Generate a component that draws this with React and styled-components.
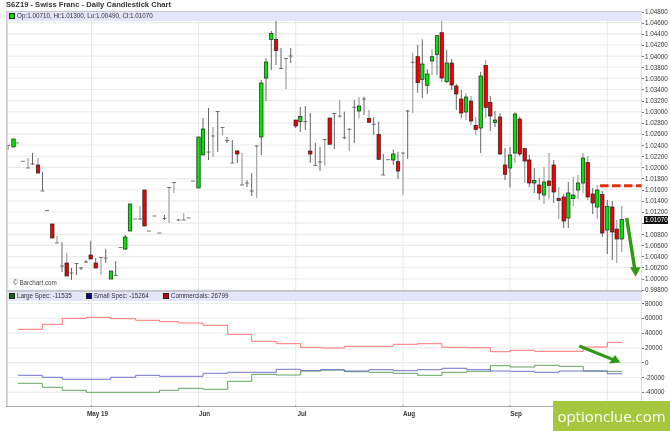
import React from "react";
import styled, { createGlobalStyle } from "styled-components";

const Global = createGlobalStyle`
  html, body { margin: 0; padding: 0; background: #fff; overflow: hidden; }
  body { font-family: "Liberation Sans", Arial, sans-serif; }
`;

const Page = styled.div`
  position: relative;
  width: 670px;
  height: 431px;
  overflow: hidden;
  background: #fff;
  filter: blur(0.3px);
`;
const Title = styled.h1`
  margin: 0;
  padding: 0 0 0 6px;
  height: 11px;
  font-size: 7.6px;
  line-height: 10px;
  font-weight: 700;
  color: #333;
  white-space: nowrap;
`;
const ChartRow = styled.div`
  display: grid;
  grid-template-columns: 636px 28px;
  margin-left: 6px;
`;
const Plot = styled.div`
  display: flex;
  flex-direction: column;
`;
const Pane = styled.div`
  position: relative;
  height: ${(p) => p.$h}px;
`;
const PaneSvg = styled.svg`
  display: block;
  width: 636px;
  height: ${(p) => p.$h}px;
`;
const Legend = styled.div`
  position: absolute;
  left: 2px;
  right: 0;
  top: ${(p) => p.$top}px;
  height: 8.5px;
  display: flex;
  align-items: center;
  gap: 14px;
  padding-left: 1px;
  background: rgba(226, 226, 250, 0.92);
  font-size: 6.3px;
  line-height: 8px;
  color: #333;
  white-space: nowrap;
`;
const LegendItem = styled.span`
  display: inline-flex;
  align-items: center;
  gap: 2px;
`;
const Swatch = styled.i`
  display: block;
  width: 4px;
  height: 4px;
  border: 0.5px solid #222;
  background: ${(p) => p.$c};
`;
const Credit = styled.div`
  position: absolute;
  left: 7px;
  top: 267px;
  font-size: 6.3px;
  line-height: 9px;
  color: #444;
`;
const AxisColumn = styled.div`
  margin-top: -5px;
  display: flex;
  flex-direction: column;
  height: 300px;
  position: relative;
`;
const AxisList = styled.div`
  display: flex;
  flex-direction: column;
  margin-top: ${(p) => p.$mt || 0}px;
`;
const AxisLabel = styled.div`
  height: ${(p) => p.$h}px;
  display: flex;
  align-items: center;
  padding-left: 3px;
  position: relative;
  font-size: 6.3px;
  color: #333;
  &::before {
    content: "";
    position: absolute;
    left: 0;
    top: 50%;
    width: 2px;
    height: 0.7px;
    background: #777;
  }
`;
const LastPrice = styled.div`
  position: absolute;
  left: 2px;
  top: 209.5px;
  width: 24px;
  height: 8px;
  padding-left: 1px;
  box-sizing: border-box;
  background: #111;
  color: #fff;
  font-size: 6.3px;
  line-height: 8px;
`;
const XAxis = styled.div`
  display: grid;
  grid-template-columns: 60px 154px 41px 173px 41px;
  padding-left: 61.5px;
  padding-top: 1px;
  height: 13px;
`;
const XLabel = styled.div`
  text-align: center;
  font-size: 6.3px;
  line-height: 12px;
  font-weight: 700;
  color: #333;
`;
const Watermark = styled.div`
  position: absolute;
  right: 0;
  bottom: 0;
  width: 117px;
  height: 30px;
  background: #a6c63c;
  color: #fff;
  display: flex;
  align-items: center;
  justify-content: center;
  font-family: "Open Sans", sans-serif;
  font-size: 15px;
  line-height: 30px;
`;

const VGRID = [91.5, 198.5, 295.7, 403, 510, 607.3];
const PRICE_LABELS = Array.from({ length: 26 }, (_, i) => (1.048 - i * 0.002).toFixed(5));
const VOL_LABELS = ["80000", "60000", "40000", "20000", "0", "-20000", "-40000"];
const MONTHS = ["May 19", "Jun", "Jul", "Aug", "Sep"];
const HIDDEN_LABEL = "1.01000";

// [x, high, low, kind, a, b, greyWick]  kind: r/g = body a..b, t = tick at a
const CANDLES = [
  [8,145,150,"t",145.5],[13.5,139,147,"g",139,147],[17,143,143,"t",143],
  [23,161.3,161.3,"t",161.3],[28,158,168,"t",168,0,1],[32.5,153,165,"t",164],[38,158,173,"r",165,173,1],
  [42.5,172,191,"t",191],[47,210.5,210.5,"t",210.5],[52.3,224,238,"r",224,238],[57,236,243,"t",243,0,1],
  [62,242,272,"t",266],[66.7,253,276,"r",263,276,1],[71.5,268,280,"t",273],[76.5,263,275,"t",263.5],
  [81,267,270,"t",268],[86,260,263,"t",262],[90.7,241,259,"r",255,259],[95.7,258,268,"r",263,268],
  [101,257,275,"t",257.5,0,1],[105.7,249,263,"t",258],[111,271,279,"g",271,279],[115.7,261,276,"t",275.5],
  [120.5,247.5,247.5,"t",247.5],[125.3,235,250,"g",237,249],[130,204,231,"g",204,231],[135,219,219,"t",219],
  [140,206,220,"t",219,0,1],[144.5,190,226,"r",190,226],[149,231,231,"t",231],[154.5,216,216,"t",216],
  [159.5,233,233,"t",233],[164.5,215,220,"t",218.5],[169,187,223,"t",187.5,0,1],[174,182,193,"t",182.5,0,1],
  [178.5,219,221,"t",220],[183.7,213,220,"t",220,0,1],[188.5,218,218,"t",218],[193,181,181,"t",181],
  [198.5,137,188,"g",137,188],[203,118,155,"g",129,155],[208.5,108,160,"t",152],[213,127,157,"t",136,0,1],
  [217.7,111,152,"t",111.5],[222.5,127,135,"t",127.5,0,1],[227,137,143,"t",140.5],
  [232.3,140,163,"t",163],[237.3,150,163,"r",151,154],[242,153,185,"t",185,0,1],[247,180,187,"t",183],
  [251.7,173,196,"t",191],[256.7,145,198,"t",146,0,1],[261.3,80,155,"g",83,137],[266,58,101,"g",62,78],
  [271.3,31,70,"g",33.5,39.5],[276,20,65,"r",39.5,50.5],[281,48,69,"t",68.5],[286,58,89,"t",58.5,0,1],
  [290.7,48,63,"t",56],[295.7,120,128,"r",120,126],[300.3,107,132,"g",116.5,121.5],[305.3,106,130,"t",121.5],
  [310.3,113,163,"r",151,154],[315.3,143,165.7,"t",165.5],[320,146.7,171,"t",162],[324.7,139,165.7,"t",139.5,0,1],
  [329.7,118,144.3,"r",118,144.3],[334.3,113,149,"t",113.5],[339.7,100,118,"t",116,0,1],[344.3,111.7,139,"t",137.7],
  [349.3,128,151,"t",129.3,0,1],[354.3,100,143,"t",107.3],[359,97,118,"g",106,111,1],[364,96.7,115,"t",99],
  [369,110,122,"r",118.3,122.3,1],[373.7,117,135,"t",124.3],[378.7,121.7,160,"r",134.3,159.3],[383.3,154,175,"t",175],
  [388,159.7,159.7,"t",159.7],[393.3,149.5,165,"g",154,160],[398,151.7,179,"r",161.7,171],[403,152.7,195,"t",153,0,1],
  [407.7,110,159,"t",111],[412.7,52.7,113.3,"t",62.3,0,1],[417.7,45,92.7,"r",56.7,82.7],[422.3,39.3,98.3,"g",64,79.3],
  [427.3,69,94,"g",74,85.3],[432,49.3,75,"g",56.7,61,1],[437,35,75,"g",35.7,54.3],[441.7,19.3,82.3,"r",32.7,78,1],
  [446.7,50,83,"g",63,81.7],[451.7,59,90,"r",63,85],[456.3,84,110,"r",86,94],[461.3,90,118,"r",99,113],
  [466,93,120,"g",97,112,1],[471,96,125,"r",101,121,1],[475.7,117,135,"r",125.5,129.5,1],[480.7,72,153,"g",76,128],
  [485.7,60,118,"r",65.5,107.5,1],[490.3,96,131,"r",102.5,116],[495,111,127,"g",120,122.5],[500,113,155,"r",117,154],
  [505,148,180,"r",165,174.3],[510,147,187.5,"g",155,168],[515,112,163,"g",114,153,1],[519.7,117,156,"r",119,154],
  [524.7,148,183,"r",148.5,161,1],[529.3,155,187,"r",160,183],[534.3,168,193,"g",180.5,183],[539.3,178,200,"r",185,193],
  [544,167,204,"g",182,195,1],[549,153,199,"r",181,185.5,1],[553.7,160,203,"r",165,192],[558.7,187,219,"r",198.5,200.5,1],
  [563.7,194,228,"r",197,221],[568.3,182,228,"g",193,218],[573.3,177,206,"g",195,198.5,1],[578,175,199,"g",183,190,1],
  [583,153,193,"g",158,183,1],[587.7,156,200,"r",162.5,197,1],[592.7,188,214,"r",194,203],[597.3,185,219,"g",190,207,1],
  [602.3,191,237,"r",194.5,233],[607.3,200,254,"g",206.5,230],[612.3,201,260,"r",207,232],[616.7,220,263,"r",229,239,1],
  [621.7,206,252,"g",219.5,239,1],
];

const steps = (pts, end) => {
  let d = `M${pts[0][0]} ${pts[0][1]}`;
  pts.forEach(([x, y], i) => {
    if (i) d += `H${x}V${y}`;
  });
  return d + `H${end}`;
};
const RED = [[18,329.3],[42.3,324.3],[62.3,318.3],[86.3,317.3],[110.7,318.7],[135.7,320.3],[159.5,321.7],[178.7,323],[203,325.3],[227.7,334.3],[251.7,341.3],[276.3,343.7],[300.7,347.3],[320.7,348],[344.3,346.3],[393.3,344.3],[417.7,343.7],[442,347.3],[466.7,347.7],[490.3,351.7],[510.3,350.3],[534.7,351.3],[583.3,347],[607.3,342.3]];
const BLUE = [[18,375.3],[42.3,377.3],[62.3,379.3],[110.7,377.3],[135.7,375.3],[159.5,376.3],[203,373.3],[227.7,372.3],[276.3,369.3],[300.7,370.7],[320.7,369.7],[344.3,371],[369,369.7],[393.3,370.7],[417.7,369.7],[442,368.3],[466.7,369.7],[490.3,371],[510.3,371.3],[534.7,372.3],[559,371],[607.3,373.7]];
const GREEN = [[18,383.3],[42.3,387.3],[62.3,390.3],[86.3,392.3],[159.5,390.3],[178.7,388.3],[203,389.3],[227.7,381.3],[251.7,374.3],[276.3,375],[300.7,371],[320.7,370],[344.3,371.7],[369,372.3],[393.3,373.3],[417.7,375.3],[442,372.3],[466.7,371.3],[490.3,365.7],[510.3,367],[534.7,365.3],[559,366.3],[583.3,371],[607.3,371.3]];

const Candle = ({ c }) => {
  const [x, hi, lo, kind, a, b, grey] = c;
  const wick = grey ? "#a8a8a8" : "#555";
  const w = grey ? 1.3 : 0.9;
  return (
    <g>
      {hi !== lo && <line x1={x} x2={x} y1={hi} y2={lo} stroke={wick} strokeWidth={w} />}
      {kind === "t" ? (
        <line x1={x - 2} x2={x + 2} y1={a} y2={a} stroke="#555" strokeWidth="0.8" />
      ) : (
        <rect
          x={x - 1.7}
          y={a}
          width="3.4"
          height={b - a}
          fill={kind === "r" ? "#f50000" : "#00e600"}
          stroke="#222"
          strokeWidth="0.7"
        />
      )}
    </g>
  );
};

const GridLines = ({ ys, y0, y1 }) => (
  <g>
    {ys.map((y) => (
      <line key={y} x1="7" x2="642" y1={y} y2={y} stroke="#ececec" strokeWidth="1.2" />
    ))}
    {VGRID.map((x) => (
      <line key={x} x1={x} x2={x} y1={y0} y2={y1} stroke="#e8e8e8" strokeWidth="1" />
    ))}
  </g>
);

const PRICE_YS = Array.from({ length: 25 }, (_, i) => 22.64 + i * 11.14);
const VOL_YS = VOL_LABELS.map((_, i) => 303.5 + i * 14.8);

export default function App() {
  return (
    <Page>
      <Global />
      <Title>S6Z19 - Swiss Franc - Daily Candlestick Chart</Title>
      <ChartRow>
        <Plot>
          <Pane $h={281}>
            <PaneSvg $h={281} viewBox="6 11 636 281">
              <GridLines ys={PRICE_YS} y0={11} y1={292} />
              {CANDLES.map((c) => (
                <Candle key={c[0]} c={c} />
              ))}
              <line x1="600" x2="642" y1="185.7" y2="185.7" stroke="#e8300f" strokeWidth="3" strokeDasharray="8.5 3.5" />
              <line x1="626.7" y1="218" x2="634.6" y2="268" stroke="#2f9a12" strokeWidth="3.4" />
              <polygon points="630,267.3 640.5,267.3 635.7,276.7" fill="#2f9a12" />
              <rect x="6" y="11" width="1.6" height="281" fill="#c9c9c9" />
              <rect x="6" y="11" width="636" height="0.8" fill="#bbb" />
              <rect x="6" y="290" width="636" height="2" fill="#c8c8c8" />
              <rect x="641.5" y="11" width="1.2" height="281" fill="#bbb" />
            </PaneSvg>
            <Legend $top={1}>
              <LegendItem>
                <Swatch $c="#00e600" />
                Op:1.00710, Hi:1.01300, Lo:1.00490, Cl:1.01070
              </LegendItem>
            </Legend>
            <Credit>© Barchart.com</Credit>
          </Pane>
          <Pane $h={115}>
            <PaneSvg $h={115} viewBox="6 292 636 115">
              <GridLines ys={VOL_YS} y0={292} y1={407} />
              <path d={steps(RED, 622.3)} fill="none" stroke="#ff6464" strokeWidth="0.9" />
              <path d={steps(GREEN, 622.3)} fill="none" stroke="#4f9a4f" strokeWidth="0.9" />
              <path d={steps(BLUE, 622.3)} fill="none" stroke="#6262c8" strokeWidth="0.9" />
              <line x1="579.3" y1="346" x2="615" y2="360.3" stroke="#2f9a12" strokeWidth="3" />
              <polygon points="620.5,362.5 609,363.5 615,355" fill="#2f9a12" />
              <rect x="6" y="292" width="1.6" height="115" fill="#c9c9c9" />
              <rect x="6" y="406" width="636" height="1" fill="#aaa" />
              <rect x="641.5" y="292" width="1.2" height="115" fill="#bbb" />
              {VGRID.slice(0, 5).map((x) => (
                <line key={x} x1={x} x2={x} y1="405" y2="407" stroke="#888" strokeWidth="0.7" />
              ))}
            </PaneSvg>
            <Legend $top={0}>
              <LegendItem>
                <Swatch $c="#0a6a12" />
                Large Spec: -11535
              </LegendItem>
              <LegendItem>
                <Swatch $c="#00008b" />
                Small Spec: -15264
              </LegendItem>
              <LegendItem>
                <Swatch $c="#d00000" />
                Commercials: 26799
              </LegendItem>
            </Legend>
          </Pane>
          <XAxis>
            {MONTHS.map((m) => (
              <XLabel key={m}>{m}</XLabel>
            ))}
          </XAxis>
        </Plot>
        <AxisColumn>
          <AxisList>
            {PRICE_LABELS.map((l) => (
              <AxisLabel key={l} $h={11.14}>
                {l === HIDDEN_LABEL ? "" : l}
              </AxisLabel>
            ))}
          </AxisList>
          <AxisList $mt={0.5}>
            {VOL_LABELS.map((l) => (
              <AxisLabel key={l} $h={14.8}>
                {l}
              </AxisLabel>
            ))}
          </AxisList>
          <LastPrice>1.01070</LastPrice>
        </AxisColumn>
      </ChartRow>
      <Watermark>optionclue.com</Watermark>
    </Page>
  );
}
